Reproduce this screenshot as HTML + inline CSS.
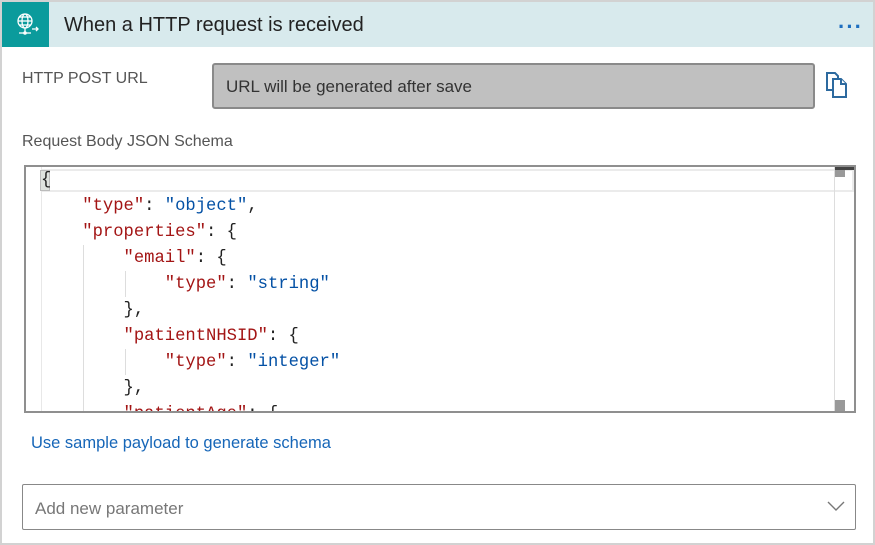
<!DOCTYPE html>
<html><head><meta charset="utf-8"><style>
*{margin:0;padding:0;box-sizing:border-box}
body{width:875px;height:545px;background:#fff;font-family:"Liberation Sans",sans-serif;position:relative;overflow:hidden}
.outer{position:absolute;left:0;top:0;width:875px;height:545px;border:2px solid #d2d2d2}
.hdr{position:absolute;left:2px;top:2px;width:871px;height:45px;background:#d8eaed}
.ico{position:absolute;left:2px;top:2px;width:47px;height:45px;background:#0b9b9c}
.title{position:absolute;left:64px;top:14px;font-size:20px;color:#222}
.dots{position:absolute;left:838px;top:14px;font-size:22px;font-weight:bold;color:#1e6fc0;letter-spacing:1px}
.lbl{position:absolute;font-size:16px;color:#555}
.url{position:absolute;left:212px;top:63px;width:603px;height:46px;background:#c0c0c0;border:2px solid #8a8a8a;border-radius:3px;font-size:17px;color:#333;padding:12px 0 0 12px}
.ed{position:absolute;left:24px;top:165px;width:832px;height:248px;border:2px solid #8f8f8f;overflow:hidden;background:#fff}
.gut{position:absolute;left:15px;top:0;width:1px;height:248px;background:#e8e8e8}
.cur{position:absolute;left:16px;top:2px;width:812px;height:23px;border:2px solid #ebebeb}
.bk{position:absolute;left:14px;top:3px;width:10px;height:21px;background:#dfe3df;border:1px solid #bbb}
.sb{position:absolute;left:808px;top:0;width:1px;height:248px;background:#ddd}
.sbt{position:absolute;left:809px;top:0;width:21px;height:3px;background:#444}
.th{position:absolute;left:809px;top:3px;width:10px;height:7px;background:#999}
.th2{position:absolute;left:809px;top:233px;width:10px;height:12px;background:#999}
.code{position:absolute;left:15px;top:1px;font-family:"Liberation Mono",monospace;font-size:17.2px;line-height:26px;color:#222;white-space:pre}
.k{color:#a31515}.s{color:#0451a5}
.ig{position:absolute;width:1px;background:#ddd}
.link{position:absolute;left:31px;top:434px;font-size:16.5px;color:#1666b8}
.dd{position:absolute;left:22px;top:484px;width:834px;height:46px;border:1px solid #888;border-radius:2px;font-size:17px;color:#777;padding:14px 0 0 12px}
</style></head><body>
<div class="outer"></div>
<div class="hdr"></div>
<div class="ico"><svg width="47" height="45" viewBox="0 0 47 45"><g fill="none" stroke="#fff" stroke-width="1.3"><circle cx="23" cy="19" r="7"/><ellipse cx="23" cy="19" rx="3" ry="7"/><line x1="16" y1="19" x2="30" y2="19"/><line x1="17" y1="15" x2="29" y2="15"/><line x1="17" y1="23" x2="29" y2="23"/><line x1="23" y1="26" x2="23" y2="31"/><line x1="17" y1="31" x2="29" y2="31"/><path d="M30 27h6M34 25l2 2-2 2"/></g><circle cx="23" cy="31" r="1.8" fill="#fff"/></svg></div>
<div class="title">When a HTTP request is received</div>
<div class="dots">···</div>
<div class="lbl" style="left:22px;top:70px">HTTP POST URL</div>
<div class="url">URL will be generated after save</div>
<svg style="position:absolute;left:826px;top:72px" width="24" height="26" viewBox="0 0 24 26"><g fill="#fff" stroke="#2d6a9f" stroke-width="2"><path d="M1 1h8l3 3v14H1z"/><path d="M7 7h8l5 5v13H7z"/><path d="M15 7v5h5"/></g></svg>
<div class="lbl" style="left:22px;top:133px">Request Body JSON Schema</div>
<div class="ed">
<div class="gut"></div>
<div class="cur"></div>
<div class="bk"></div>
<div class="ig" style="left:57px;top:78px;height:170px"></div>
<div class="ig" style="left:99px;top:104px;height:26px"></div>
<div class="ig" style="left:99px;top:182px;height:26px"></div>
<div class="code">{
    <span class="k">"type"</span>: <span class="s">"object"</span>,
    <span class="k">"properties"</span>: {
        <span class="k">"email"</span>: {
            <span class="k">"type"</span>: <span class="s">"string"</span>
        },
        <span class="k">"patientNHSID"</span>: {
            <span class="k">"type"</span>: <span class="s">"integer"</span>
        },
        <span class="k">"patientAge"</span>: {</div>
<div class="sb"></div><div class="sbt"></div><div class="th"></div><div class="th2"></div>
</div>
<div class="link">Use sample payload to generate schema</div>
<div class="dd">Add new parameter<svg style="position:absolute;right:10px;top:16px" width="18" height="11" viewBox="0 0 18 11"><path d="M1 1l8 8 8-8" fill="none" stroke="#777" stroke-width="1.4"/></svg></div>
</body></html>
